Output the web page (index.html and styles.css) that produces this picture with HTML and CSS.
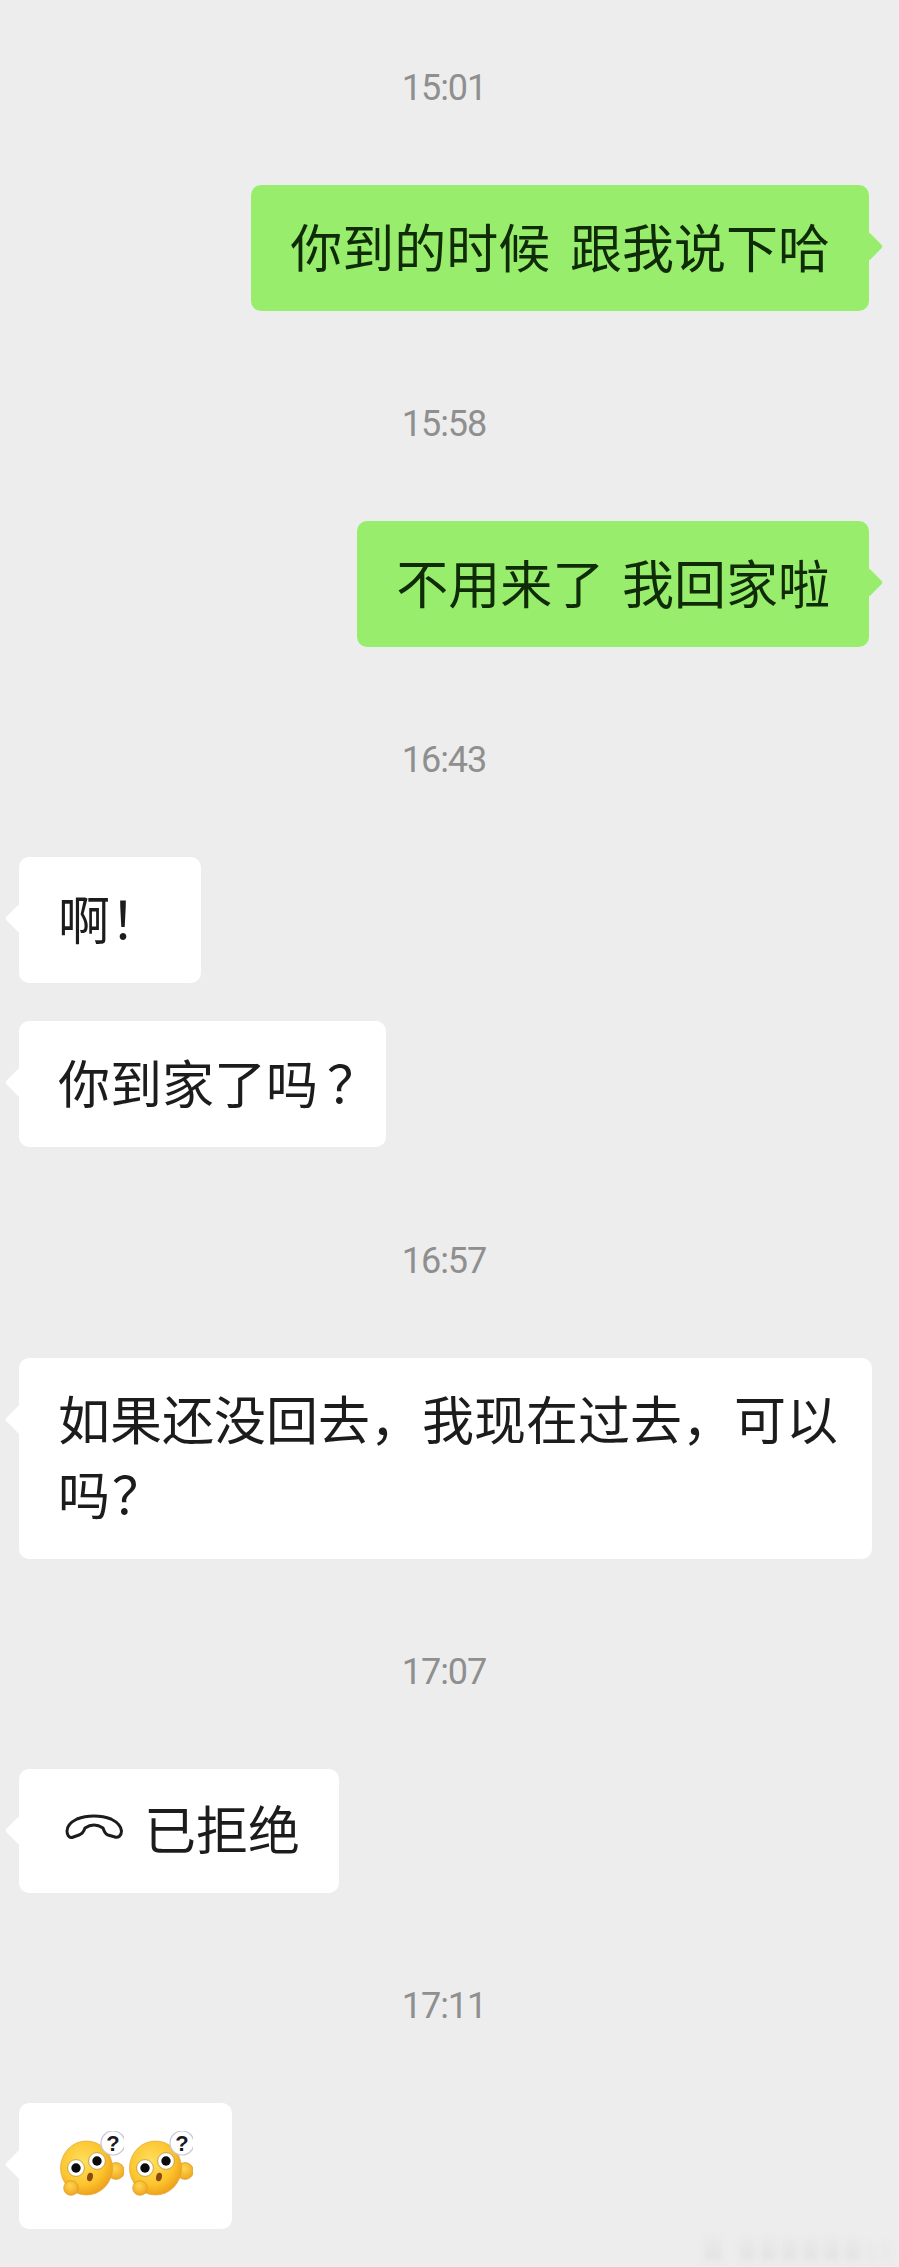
FILE: index.html
```html
<!DOCTYPE html>
<html lang="zh-CN">
<head>
<meta charset="utf-8">
<title>聊天记录</title>
<link rel="stylesheet" href="styles.css">
</head>
<body>
<svg class="defs" width="0" height="0" aria-hidden="true">
  <defs>
    <radialGradient id="faceFill" cx="0.42" cy="0.38" r="0.68">
      <stop offset="0" stop-color="#ffdf5e"/>
      <stop offset="0.62" stop-color="#fcc52f"/>
      <stop offset="1" stop-color="#eb9a14"/>
    </radialGradient>
    <radialGradient id="handFill" cx="0.45" cy="0.35" r="0.75">
      <stop offset="0" stop-color="#ffd650"/>
      <stop offset="1" stop-color="#ee9f18"/>
    </radialGradient>
    <symbol id="emoji" viewBox="0 0 64 65">
      <circle cx="56" cy="40" r="8.4" fill="url(#handFill)" stroke="#d99a2b" stroke-width="0.7"/>
      <ellipse cx="26.5" cy="37" rx="26" ry="27" fill="url(#faceFill)" stroke="#dfa537" stroke-width="0.7"/>
      <circle cx="11" cy="57" r="7.3" fill="url(#handFill)" stroke="#d99a2b" stroke-width="0.7"/>
      <circle cx="53" cy="12" r="12" fill="#fff" stroke="#c9c6d6" stroke-width="1.2"/>
      <text x="53" y="19.5" class="emoji-q">?</text>
      <circle cx="16" cy="37" r="8.4" fill="#fff" stroke="#b99334" stroke-width="0.8"/>
      <circle cx="16" cy="37" r="4.7" fill="#0b0b0b"/>
      <circle cx="37" cy="30" r="8.4" fill="#fff" stroke="#b99334" stroke-width="0.8"/>
      <circle cx="37" cy="30" r="4.7" fill="#0b0b0b"/>
      <ellipse cx="30" cy="46" rx="2.9" ry="4.3" fill="#8b4a12" transform="rotate(12 30 46)"/>
    </symbol>
  </defs>
</svg>
<main class="chat">
  <section class="group">
    <div class="time">15:01</div>
    <div class="bubble sent wide-gap"><span class="text">你到的时候 跟我说下哈</span></div>
  </section>
  <section class="group">
    <div class="time">15:58</div>
    <div class="bubble sent"><span class="text">不用来了 我回家啦</span></div>
  </section>
  <section class="group">
    <div class="time">16:43</div>
    <div class="bubble recv"><span class="text">啊&#xFF01;</span></div>
    <div class="bubble recv"><span class="text">你到家了吗<span class="narrow">&#xFF1F;</span></span></div>
  </section>
  <section class="group">
    <div class="time">16:57</div>
    <div class="bubble recv multi"><span class="text">如果还没回去&#xFF0C;我现在过去&#xFF0C;可以吗<span class="narrow">&#xFF1F;</span></span></div>
  </section>
  <section class="group">
    <div class="time">17:07</div>
    <div class="bubble recv call">
      <svg class="hangup" viewBox="0 0 58 25" aria-hidden="true">
        <path d="M2 17C2 12 6 8 12 5C22 1 36 1 46 5C52 8 56 12 56.5 17C56.5 22 53 24 50 23L43 21C40 20 39 17 38 14C32 10 26 10 20 14C19 17 17 20 14 21L7 23.5C4 24 2 21 2 17Z"/>
      </svg>
      <span class="text">已拒绝</span>
    </div>
  </section>
  <section class="group">
    <div class="time">17:11</div>
    <div class="bubble recv emojis">
      <svg class="emoji"><use href="#emoji"/></svg>
      <svg class="emoji"><use href="#emoji"/></svg>
    </div>
  </section>
</main>
<div class="watermark" aria-hidden="true">
  <i class="wide"></i><i></i><i></i><i></i><i></i><i></i><i></i><i class="thin"></i><i class="thin"></i>
</div>
</body>
</html>
```
FILE: styles.css
```css
* { box-sizing: border-box; }
html, body { margin: 0; padding: 0; }
body {
  position: relative;
  width: 899px;
  height: 2267px;
  overflow: hidden;
  background: #ededed;
  color: #1c1c1c;
  font-family: "Noto Sans CJK SC", "Noto Sans", sans-serif;
}
.defs { position: absolute; }
.chat {
  display: flex;
  flex-direction: column;
  gap: 91.2px;
  padding: 66px 27px 0 19px;
}
.group {
  display: flex;
  flex-direction: column;
  gap: 38px;
}
.time {
  height: 41px;
  margin-bottom: 40px;
  padding-right: 3px;
  color: #8f8f8f;
  font-family: Roboto, "Liberation Sans", sans-serif;
  font-size: 36px;
  line-height: 45px;
  letter-spacing: -1px;
  text-align: center;
}
.bubble {
  position: relative;
  width: fit-content;
  max-width: 853px;
  padding: 25.5px 39px;
  border-radius: 10px;
  background: #fff;
  font-size: 52px;
  line-height: 75px;
  word-spacing: 6px;
  white-space: nowrap;
}
.text {
  display: block;
  margin-top: -3px;
  margin-bottom: 3px;
}
.bubble::before {
  content: "";
  position: absolute;
  top: 51px;
  width: 21px;
  height: 21px;
  border-radius: 3px;
  background: inherit;
  transform: rotate(45deg);
}
.recv::before { left: -10px; }
.sent {
  align-self: flex-end;
  margin-right: 3px;
  background: #98ee6c;
  color: #0f2b08;
}
.sent::before { right: -10px; }
.wide-gap { word-spacing: 8px; }
.narrow { margin-left: 9px; margin-right: -32px; }
.multi { padding-right: 34px; white-space: normal; }
.multi .narrow { margin-left: 2px; margin-right: 0; }
.call {
  display: flex;
  align-items: center;
  gap: 21px;
  height: 124px;
  padding-left: 46px;
  padding-right: 39px;
}
.hangup {
  flex: none;
  width: 58px;
  height: 25px;
  margin-top: -8px;
  fill: none;
  stroke: #1c1c1c;
  stroke-width: 3;
  stroke-linejoin: round;
}
.emojis {
  display: flex;
  gap: 5px;
  height: 126px;
  padding: 28px 39px 0 41px;
}
.emoji {
  flex: none;
  width: 64px;
  height: 65px;
}
.emoji-q {
  fill: #1a1a24;
  font-family: "Liberation Sans", sans-serif;
  font-size: 22px;
  font-weight: 700;
  text-anchor: middle;
}
.watermark {
  position: absolute;
  right: 9px;
  bottom: 7px;
  display: flex;
  gap: 6px;
  height: 30px;
  filter: blur(3px);
}
.watermark i {
  display: block;
  width: 15px;
  background: linear-gradient(#ededed, #e2e2e2);
}
.watermark .wide { width: 18px; margin-right: 12px; }
.watermark .thin { width: 9px; background: linear-gradient(#ededed, #e7e7e7); }
```
